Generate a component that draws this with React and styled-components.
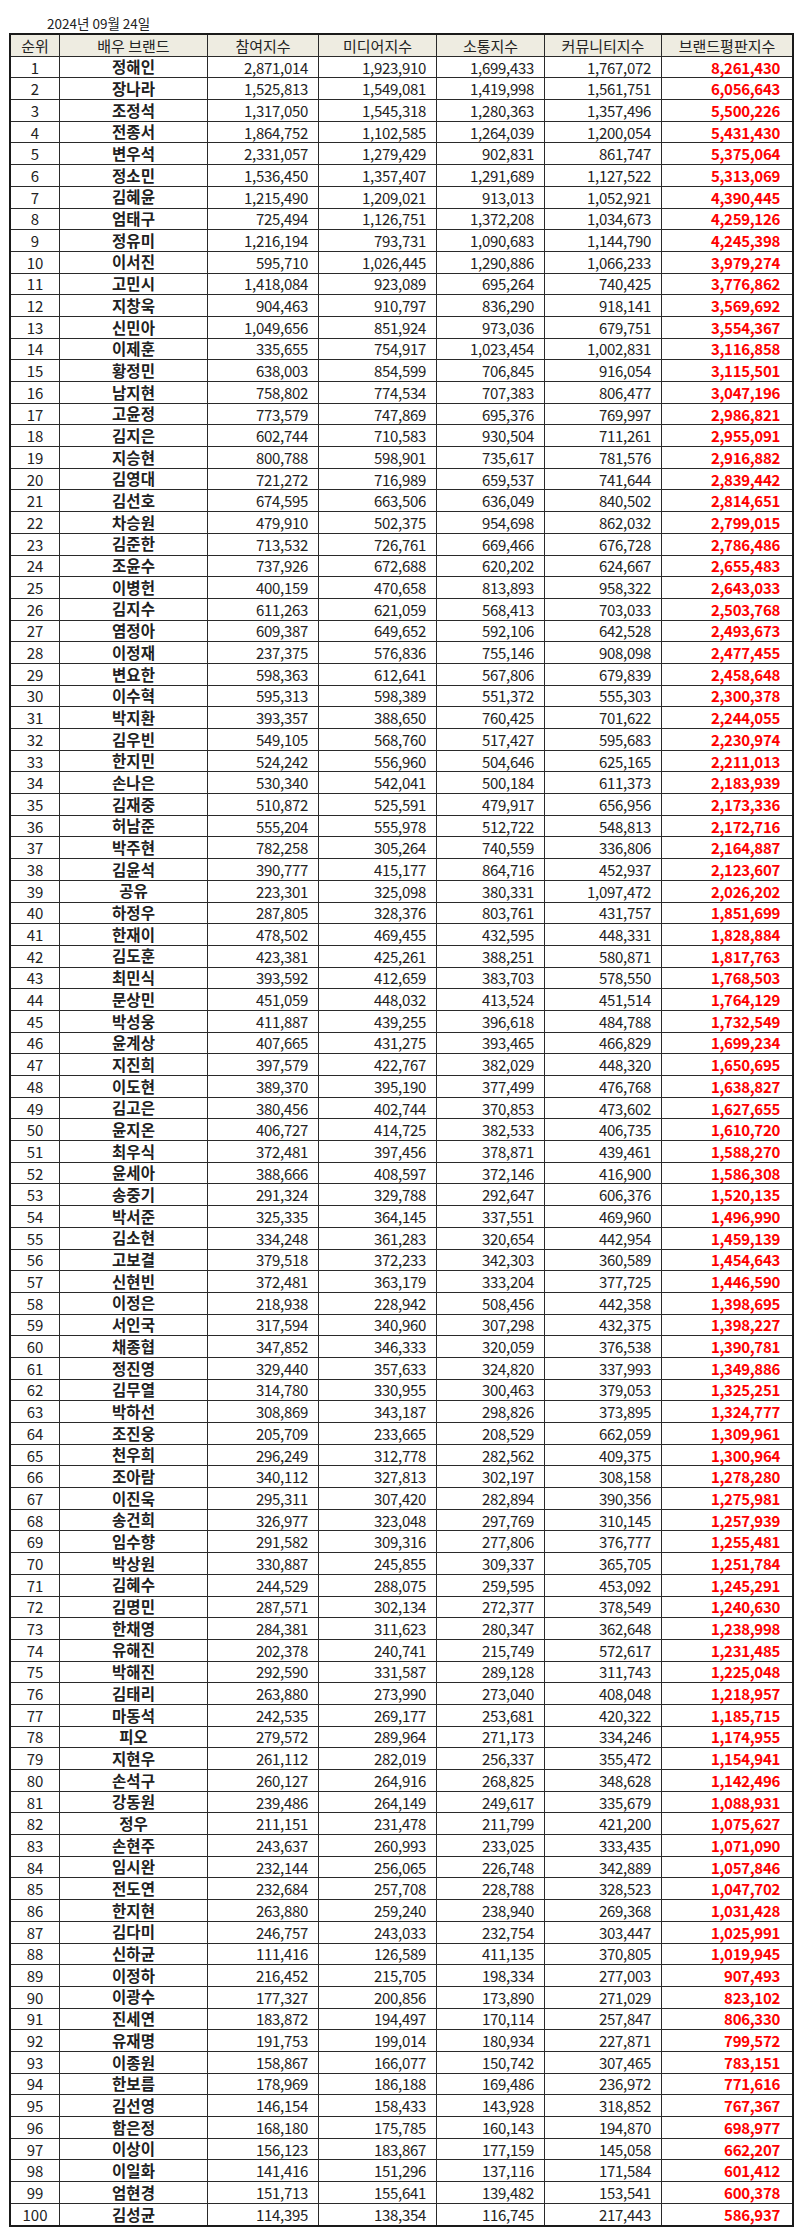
import styled, { createGlobalStyle } from "styled-components";

const GlobalStyle = createGlobalStyle`
  body {
    margin: 0;
    background: #ffffff;
    font-family: "Noto Sans CJK KR", "Noto Sans", sans-serif;
    color: #222;
  }
`;

// name | 참여 | 미디어 | 소통 | 커뮤니티 | 브랜드평판 (rank comes from the line order)
const RAW = `정해인 2,871,014 1,923,910 1,699,433 1,767,072 8,261,430
장나라 1,525,813 1,549,081 1,419,998 1,561,751 6,056,643
조정석 1,317,050 1,545,318 1,280,363 1,357,496 5,500,226
전종서 1,864,752 1,102,585 1,264,039 1,200,054 5,431,430
변우석 2,331,057 1,279,429 902,831 861,747 5,375,064
정소민 1,536,450 1,357,407 1,291,689 1,127,522 5,313,069
김혜윤 1,215,490 1,209,021 913,013 1,052,921 4,390,445
엄태구 725,494 1,126,751 1,372,208 1,034,673 4,259,126
정유미 1,216,194 793,731 1,090,683 1,144,790 4,245,398
이서진 595,710 1,026,445 1,290,886 1,066,233 3,979,274
고민시 1,418,084 923,089 695,264 740,425 3,776,862
지창욱 904,463 910,797 836,290 918,141 3,569,692
신민아 1,049,656 851,924 973,036 679,751 3,554,367
이제훈 335,655 754,917 1,023,454 1,002,831 3,116,858
황정민 638,003 854,599 706,845 916,054 3,115,501
남지현 758,802 774,534 707,383 806,477 3,047,196
고윤정 773,579 747,869 695,376 769,997 2,986,821
김지은 602,744 710,583 930,504 711,261 2,955,091
지승현 800,788 598,901 735,617 781,576 2,916,882
김영대 721,272 716,989 659,537 741,644 2,839,442
김선호 674,595 663,506 636,049 840,502 2,814,651
차승원 479,910 502,375 954,698 862,032 2,799,015
김준한 713,532 726,761 669,466 676,728 2,786,486
조윤수 737,926 672,688 620,202 624,667 2,655,483
이병헌 400,159 470,658 813,893 958,322 2,643,033
김지수 611,263 621,059 568,413 703,033 2,503,768
염정아 609,387 649,652 592,106 642,528 2,493,673
이정재 237,375 576,836 755,146 908,098 2,477,455
변요한 598,363 612,641 567,806 679,839 2,458,648
이수혁 595,313 598,389 551,372 555,303 2,300,378
박지환 393,357 388,650 760,425 701,622 2,244,055
김우빈 549,105 568,760 517,427 595,683 2,230,974
한지민 524,242 556,960 504,646 625,165 2,211,013
손나은 530,340 542,041 500,184 611,373 2,183,939
김재중 510,872 525,591 479,917 656,956 2,173,336
허남준 555,204 555,978 512,722 548,813 2,172,716
박주현 782,258 305,264 740,559 336,806 2,164,887
김윤석 390,777 415,177 864,716 452,937 2,123,607
공유 223,301 325,098 380,331 1,097,472 2,026,202
하정우 287,805 328,376 803,761 431,757 1,851,699
한재이 478,502 469,455 432,595 448,331 1,828,884
김도훈 423,381 425,261 388,251 580,871 1,817,763
최민식 393,592 412,659 383,703 578,550 1,768,503
문상민 451,059 448,032 413,524 451,514 1,764,129
박성웅 411,887 439,255 396,618 484,788 1,732,549
윤계상 407,665 431,275 393,465 466,829 1,699,234
지진희 397,579 422,767 382,029 448,320 1,650,695
이도현 389,370 395,190 377,499 476,768 1,638,827
김고은 380,456 402,744 370,853 473,602 1,627,655
윤지온 406,727 414,725 382,533 406,735 1,610,720
최우식 372,481 397,456 378,871 439,461 1,588,270
윤세아 388,666 408,597 372,146 416,900 1,586,308
송중기 291,324 329,788 292,647 606,376 1,520,135
박서준 325,335 364,145 337,551 469,960 1,496,990
김소현 334,248 361,283 320,654 442,954 1,459,139
고보결 379,518 372,233 342,303 360,589 1,454,643
신현빈 372,481 363,179 333,204 377,725 1,446,590
이정은 218,938 228,942 508,456 442,358 1,398,695
서인국 317,594 340,960 307,298 432,375 1,398,227
채종협 347,852 346,333 320,059 376,538 1,390,781
정진영 329,440 357,633 324,820 337,993 1,349,886
김무열 314,780 330,955 300,463 379,053 1,325,251
박하선 308,869 343,187 298,826 373,895 1,324,777
조진웅 205,709 233,665 208,529 662,059 1,309,961
천우희 296,249 312,778 282,562 409,375 1,300,964
조아람 340,112 327,813 302,197 308,158 1,278,280
이진욱 295,311 307,420 282,894 390,356 1,275,981
송건희 326,977 323,048 297,769 310,145 1,257,939
임수향 291,582 309,316 277,806 376,777 1,255,481
박상원 330,887 245,855 309,337 365,705 1,251,784
김혜수 244,529 288,075 259,595 453,092 1,245,291
김명민 287,571 302,134 272,377 378,549 1,240,630
한채영 284,381 311,623 280,347 362,648 1,238,998
유해진 202,378 240,741 215,749 572,617 1,231,485
박해진 292,590 331,587 289,128 311,743 1,225,048
김태리 263,880 273,990 273,040 408,048 1,218,957
마동석 242,535 269,177 253,681 420,322 1,185,715
피오 279,572 289,964 271,173 334,246 1,174,955
지현우 261,112 282,019 256,337 355,472 1,154,941
손석구 260,127 264,916 268,825 348,628 1,142,496
강동원 239,486 264,149 249,617 335,679 1,088,931
정우 211,151 231,478 211,799 421,200 1,075,627
손현주 243,637 260,993 233,025 333,435 1,071,090
임시완 232,144 256,065 226,748 342,889 1,057,846
전도연 232,684 257,708 228,788 328,523 1,047,702
한지현 263,880 259,240 238,940 269,368 1,031,428
김다미 246,757 243,033 232,754 303,447 1,025,991
신하균 111,416 126,589 411,135 370,805 1,019,945
이정하 216,452 215,705 198,334 277,003 907,493
이광수 177,327 200,856 173,890 271,029 823,102
진세연 183,872 194,497 170,114 257,847 806,330
유재명 191,753 199,014 180,934 227,871 799,572
이종원 158,867 166,077 150,742 307,465 783,151
한보름 178,969 186,188 169,486 236,972 771,616
김선영 146,154 158,433 143,928 318,852 767,367
함은정 168,180 175,785 160,143 194,870 698,977
이상이 156,123 183,867 177,159 145,058 662,207
이일화 141,416 151,296 137,116 171,584 601,412
엄현경 151,713 155,641 139,482 153,541 600,378
김성균 114,395 138,354 116,745 217,443 586,937`;

const rows = RAW.split("\n").map((line, i) => {
  const [name, ...nums] = line.trim().split(" ");
  return { rank: i + 1, name, nums };
});

const headers = ["순위", "배우 브랜드", "참여지수", "미디어지수", "소통지수", "커뮤니티지수", "브랜드평판지수"];

const Page = styled.div`
  padding: 13px 0 9px 9px;
  width: 786px;
`;

const DateLabel = styled.div`
  margin-left: 38px;
  height: 20px;
  font-size: 13.5px;
  line-height: 20px;
  color: #222;
`;

const Table = styled.div`
  border: 2px solid #1a1a1a;
  width: 785px;
  box-sizing: border-box;
`;

const Row = styled.div`
  display: grid;
  grid-template-columns: 49px 148px 111px 118px 108px 117px 1fr;
  height: 21.7px;
  box-sizing: border-box;
  border-bottom: 1px solid #2a2a2a;
  background: ${(p) => (p.$head ? "#eeece1" : "#fff")};

  &:last-child {
    border-bottom: none;
  }
`;

const Cell = styled.div`
  display: flex;
  align-items: center;
  justify-content: ${(p) => (p.$align === "right" ? "flex-end" : "center")};
  padding-right: ${(p) => (p.$align === "right" ? (p.$red ? "12px" : "10px") : "0")};
  border-right: 1px solid #2a2a2a;
  font-size: ${(p) => (p.$name ? "15.5px" : "15px")};
  line-height: 1;
  white-space: nowrap;
  overflow: hidden;
  color: ${(p) => (p.$red ? "#f00" : "#222")};
  font-weight: ${(p) => (p.$bold ? 700 : 400)};
  letter-spacing: ${(p) => (p.$align === "right" ? "-0.3px" : "0")};

  &:last-child {
    border-right: none;
  }
`;

export default function App() {
  return (
    <>
      <GlobalStyle />
      <Page>
        <DateLabel>2024년 09월 24일</DateLabel>
        <Table>
          <Row $head>
            {headers.map((h) => (
              <Cell key={h}>{h}</Cell>
            ))}
          </Row>
          {rows.map((r) => (
            <Row key={r.rank}>
              <Cell>{r.rank}</Cell>
              <Cell $bold $name>{r.name}</Cell>
              {r.nums.map((n, j) => (
                <Cell key={j} $align="right" $red={j === 4} $bold={j === 4}>
                  {n}
                </Cell>
              ))}
            </Row>
          ))}
        </Table>
      </Page>
    </>
  );
}
